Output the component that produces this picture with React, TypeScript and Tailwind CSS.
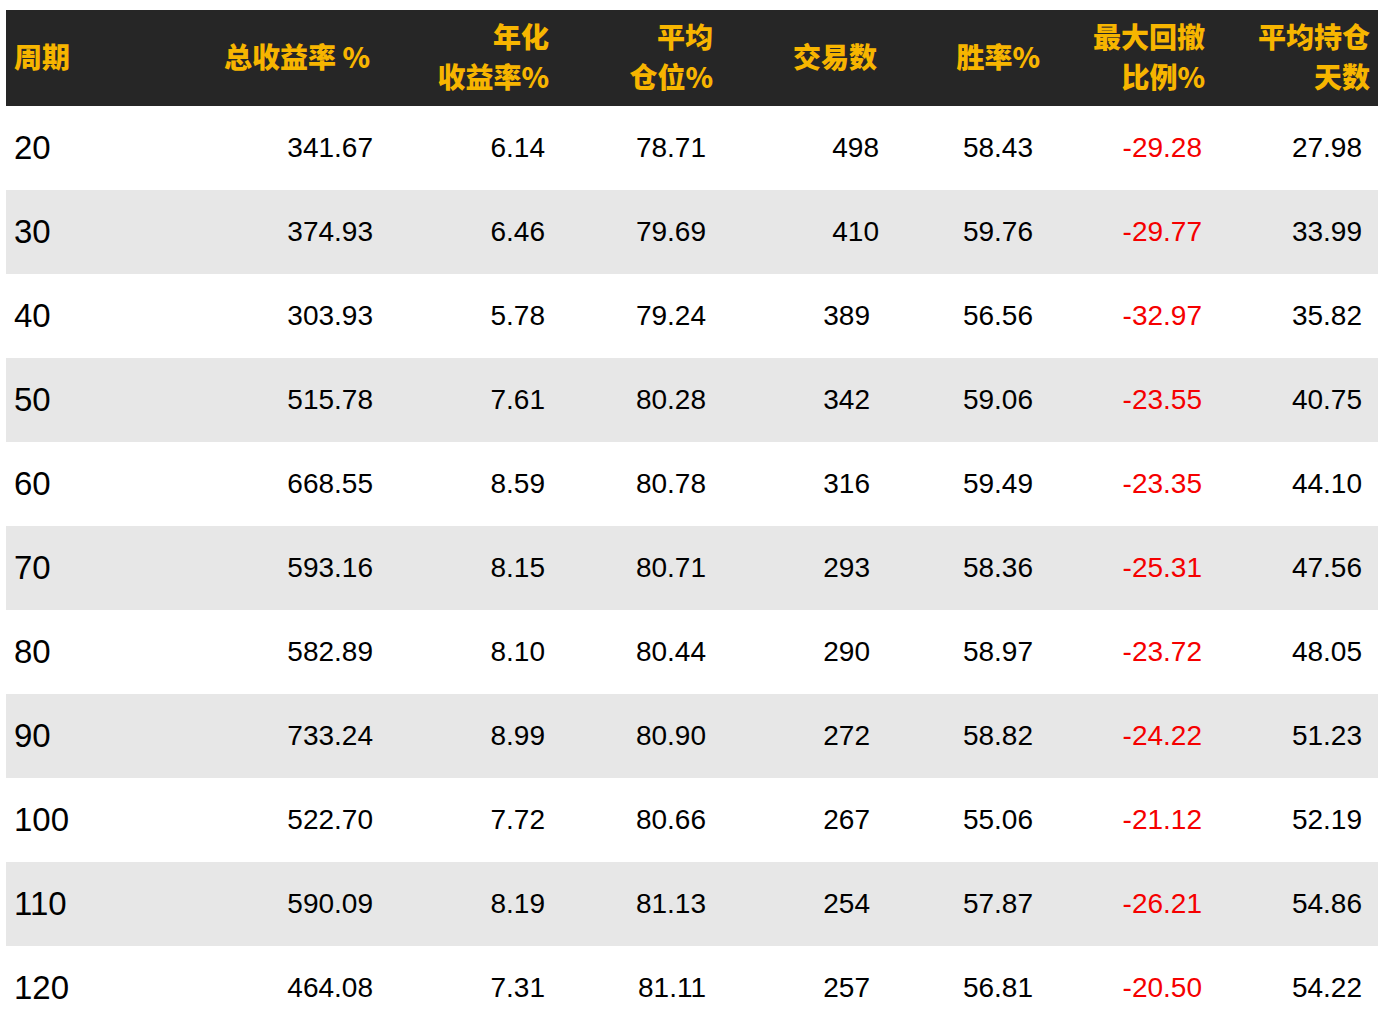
import React from "react"

// column widths and right paddings (header / body)
const cols = [
  { w: "w-[194px]", head: "pl-[8px] text-left", body: "pl-[8px] text-left text-[33px]" },
  { w: "w-[176px]", head: "pr-[6px] text-right", body: "pr-[3px] text-right" },
  { w: "w-[176px]", head: "pr-[3px] text-right", body: "pr-[7px] text-right" },
  { w: "w-[164px]", head: "pr-[3px] text-right", body: "pr-[10px] text-right" },
  { w: "w-[166px]", head: "pr-[5px] text-right", body: "pr-[12px] text-right" },
  { w: "w-[162px]", head: "pr-[4px] text-right", body: "pr-[11px] text-right" },
  { w: "w-[164px]", head: "pr-[3px] text-right", body: "pr-[6px] text-right text-[#f50000]" },
  { w: "w-[170px]", head: "pr-[8px] text-right", body: "pr-[16px] text-right" },
]

const headers: string[][] = [
  ["周期"],
  ["总收益率 %"],
  ["年化", "收益率%"],
  ["平均", "仓位%"],
  ["交易数"],
  ["胜率%"],
  ["最大回撤", "比例%"],
  ["平均持仓", "天数"],
]

const rows = [
  ["20", "341.67", "6.14", "78.71", "498", "58.43", "-29.28", "27.98"],
  ["30", "374.93", "6.46", "79.69", "410", "59.76", "-29.77", "33.99"],
  ["40", "303.93", "5.78", "79.24", "389", "56.56", "-32.97", "35.82"],
  ["50", "515.78", "7.61", "80.28", "342", "59.06", "-23.55", "40.75"],
  ["60", "668.55", "8.59", "80.78", "316", "59.49", "-23.35", "44.10"],
  ["70", "593.16", "8.15", "80.71", "293", "58.36", "-25.31", "47.56"],
  ["80", "582.89", "8.10", "80.44", "290", "58.97", "-23.72", "48.05"],
  ["90", "733.24", "8.99", "80.90", "272", "58.82", "-24.22", "51.23"],
  ["100", "522.70", "7.72", "80.66", "267", "55.06", "-21.12", "52.19"],
  ["110", "590.09", "8.19", "81.13", "254", "57.87", "-26.21", "54.86"],
  ["120", "464.08", "7.31", "81.11", "257", "56.81", "-20.50", "54.22"],
]

export default function App() {
  return (
    <div className="bg-white min-h-screen pt-[10px] pl-[6px]">
      <div className="w-[1372px]">
        <div className="flex h-[96px] items-center pb-[4px] bg-[#262626] text-[#f7b500] text-[28px] font-black leading-[40px] [font-family:'Noto_Sans_CJK_SC',sans-serif]">
          {headers.map((h, i) => (
            <div key={i} className={`${cols[i].w} ${cols[i].head}`}>
              {h.map((line) => (
                <div key={line}>{line}</div>
              ))}
            </div>
          ))}
        </div>

        {rows.map((r, ri) => (
          <div
            key={r[0]}
            className={`flex h-[84px] items-center text-[28px] text-black [font-family:'Liberation_Sans',Arial,sans-serif] ${ri % 2 === 1 ? "bg-[#e7e7e7]" : "bg-white"}`}
          >
            {r.map((v, ci) => (
              <div
                key={ci}
                className={`${cols[ci].w} ${cols[ci].body} ${ci === 4 && ri < 2 ? "!pr-[3px]" : ""}`}
              >
                {v}
              </div>
            ))}
          </div>
        ))}
      </div>
    </div>
  )
}
